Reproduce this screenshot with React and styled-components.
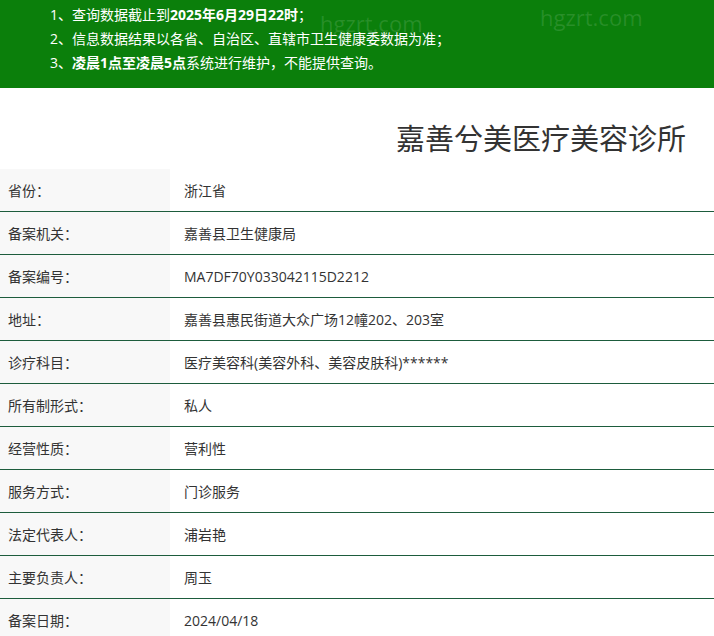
import React from "react";
import styled, { createGlobalStyle } from "styled-components";

const rows = [
  ["省份：", "浙江省"],
  ["备案机关：", "嘉善县卫生健康局"],
  ["备案编号：", "MA7DF70Y033042115D2212"],
  ["地址：", "嘉善县惠民街道大众广场12幢202、203室"],
  ["诊疗科目：", "医疗美容科(美容外科、美容皮肤科)******"],
  ["所有制形式：", "私人"],
  ["经营性质：", "营利性"],
  ["服务方式：", "门诊服务"],
  ["法定代表人：", "浦岩艳"],
  ["主要负责人：", "周玉"],
  ["备案日期：", "2024/04/18"],
];

const GlobalStyle = createGlobalStyle`
  body {
    margin: 0;
    font-family: "Open Sans", "Noto Sans CJK SC", sans-serif;
    background: #fff;
    overflow: hidden;
  }
`;

const Banner = styled.div`
  position: relative;
  height: 88px;
  background: #0b7f0b;
  color: #fff;
  font-size: 14px;
  padding: 3px 0 0 50px;
  box-sizing: border-box;
  overflow: hidden;
`;

const Line = styled.div`
  line-height: 24px;
  b { font-weight: 700; }
`;

const Mark = styled.span`
  position: absolute;
  font-size: 22px;
  color: rgba(255, 255, 255, 0.12);
  font-family: "Open Sans", sans-serif;
`;

const Title = styled.h1`
  margin: 0;
  height: 81px;
  box-sizing: border-box;
  padding: 28px 28px 0 0;
  text-align: right;
  font-weight: 400;
  font-size: 29px;
  color: #333;
`;

const Row = styled.div`
  display: grid;
  grid-template-columns: 170px 1fr;
  height: 42px;
  border-bottom: 1px solid #1d5c3d;
  font-size: 14px;
  color: #333;
  &:last-child { border-bottom: none; }
`;

const Label = styled.div`
  background: #f8f8f8;
  padding-left: 8px;
  display: flex;
  align-items: center;
`;

const Value = styled.div`
  padding-left: 14px;
  display: flex;
  align-items: center;
`;

export default function App() {
  return (
    <>
      <GlobalStyle />
      <Banner>
        <Mark style={{ left: 320, top: 8 }}>hgzrt.com</Mark>
        <Mark style={{ left: 540, top: 2 }}>hgzrt.com</Mark>
        <Line>1、查询数据截止到<b>2025年6月29日22时</b>；</Line>
        <Line>2、信息数据结果以各省、自治区、直辖市卫生健康委数据为准；</Line>
        <Line>3、<b>凌晨1点至凌晨5点</b>系统进行维护，不能提供查询。</Line>
      </Banner>
      <Title>嘉善兮美医疗美容诊所</Title>
      {rows.map(([k, v]) => (
        <Row key={k}>
          <Label>{k}</Label>
          <Value>{v}</Value>
        </Row>
      ))}
    </>
  );
}
